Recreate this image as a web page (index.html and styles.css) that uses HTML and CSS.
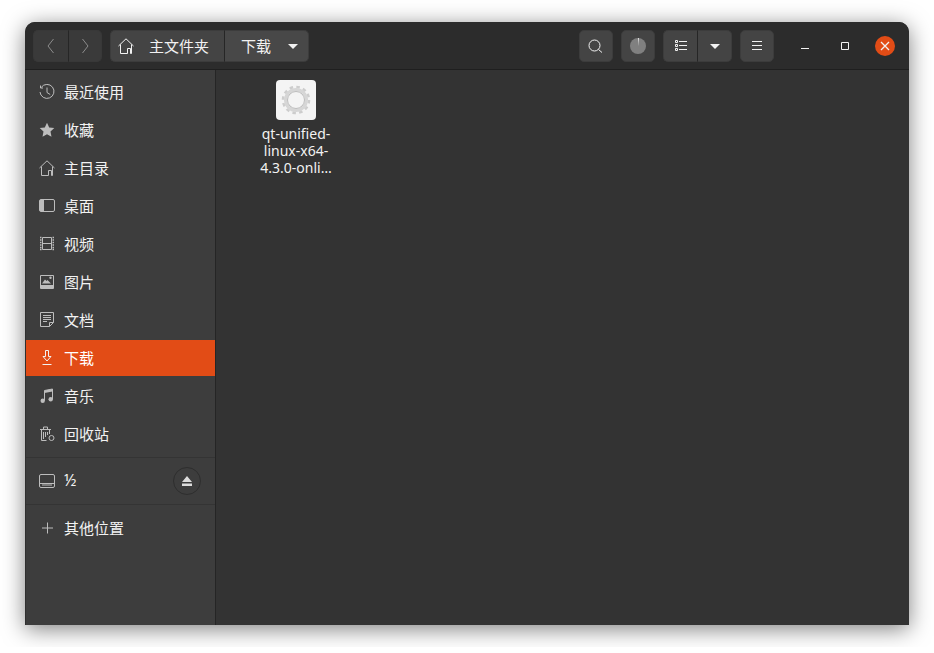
FILE: index.html
```html
<!DOCTYPE html>
<html lang="zh-CN">
<head>
    <meta charset="UTF-8">
    <title>下载</title>
    <link rel="stylesheet" href="styles.css">
</head>
<body>
    <div class="window">
        <header class="headerbar">
            <div class="btn-group nav-group">
                <button class="btn btn-nav">
                    <svg width="16" height="16" viewBox="0 0 16 16"><path d="M10.500 1 5 8l5.500 7" class="line dim"/></svg>
                </button>
                <button class="btn btn-nav">
                    <svg width="16" height="16" viewBox="0 0 16 16"><path d="M5.500 1 11 8l-5.500 7" class="line dim"/></svg>
                </button>
            </div>
            <div class="btn-group path-group">
                <button class="btn btn-home">
                    <svg width="16" height="16" viewBox="0 0 16 16"><path d="M.5 8 8 .8 15.500 8M2.500 6.500v9h7v-5h3v5h1v-9" class="line"/></svg>
                    <span>主文件夹</span>
                </button>
                <button class="btn btn-current">
                    <span>下载</span>
                    <i class="arrow"></i>
                </button>
            </div>
            <div class="spacer"></div>
            <button class="btn btn-tool">
                <svg width="16" height="16" viewBox="0 0 16 16"><circle cx="6.500" cy="7.500" r="5.500" class="line"/><path d="m10.500 11.500 3.500 3" class="line"/></svg>
            </button>
            <button class="btn btn-tool">
                <svg width="16" height="16" viewBox="0 0 16 16"><circle cx="8" cy="8" r="8" fill="#808080"/><path d="M8 0h.900L8 8z" fill="#eee"/></svg>
            </button>
            <div class="btn-group view-group">
                <button class="btn btn-tool">
                    <svg width="16" height="16" viewBox="0 0 16 16"><path d="M2.500 2.500h2v2h-2zM2.500 6.500h2v2h-2zM2.500 10.500h2v2h-2zM6 3.500h8M6 7.500h8M6 11.500h8" class="line"/></svg>
                </button>
                <button class="btn btn-tool"><i class="arrow"></i></button>
            </div>
            <button class="btn btn-tool">
                <svg width="16" height="16" viewBox="0 0 16 16"><path d="M3 3.500h10M3 7.500h10M3 11.500h10" class="line"/></svg>
            </button>
            <div class="win-controls">
                <span class="win-btn"><svg width="16" height="16" viewBox="0 0 16 16"><path d="M4 10.500h8" class="line"/></svg></span>
                <span class="win-btn"><svg width="16" height="16" viewBox="0 0 16 16"><path d="M4.500 4.500h7v7h-7z" class="line"/></svg></span>
                <span class="win-btn win-close"><svg width="16" height="16" viewBox="0 0 16 16"><path d="m4 4 8 8M12 4l-8 8" class="line"/></svg></span>
            </div>
        </header>

        <div class="content">
            <nav class="sidebar">
                <a class="side-row">
                    <svg width="16" height="16" viewBox="0 0 16 16"><path d="M2.300 3.300A7 7 0 1 1 1 8M1.500 1.500v2.500H4M8 3.500v5l3.200 2" class="icon-line"/></svg>
                    <span>最近使用</span>
                </a>
                <a class="side-row">
                    <svg width="16" height="16" viewBox="0 0 16 16"><path d="m8 .8 2.200 4.700 5.100.6-3.800 3.500 1 5.100L8 12.200l-4.500 2.500 1-5.100L.7 6.100l5.100-.6z" fill="#bdbdbd"/></svg>
                    <span>收藏</span>
                </a>
                <a class="side-row">
                    <svg width="16" height="16" viewBox="0 0 16 16"><path d="M.5 8 8 .8 15.500 8M2.500 6.500v9h7v-5h3v5h1v-9" class="icon-line"/></svg>
                    <span>主目录</span>
                </a>
                <a class="side-row">
                    <svg width="16" height="16" viewBox="0 0 16 16"><rect x=".5" y="1.500" width="15" height="12" rx="1.500" class="icon-line"/><path d="M1 2h4v11H1z" fill="#bdbdbd"/></svg>
                    <span>桌面</span>
                </a>
                <a class="side-row">
                    <svg width="16" height="16" viewBox="0 0 16 16"><path d="M3.500 1.500h9v12h-9zM3.500 7.500h9" class="icon-line"/><path d="M1 1.500h1.500M1 4h1.500M1 6.500h1.500M1 9h1.500M1 11.500h1.500M1 13.500h1.500M13.500 1.500H15M13.500 4H15M13.500 6.500H15M13.500 9H15M13.500 11.500H15M13.500 13.500H15" fill="none" stroke="#bdbdbd" stroke-width="1.300"/></svg>
                    <span>视频</span>
                </a>
                <a class="side-row">
                    <svg width="16" height="16" viewBox="0 0 16 16"><path d="M1.500 1.500h13v13h-13z" class="icon-line"/><path d="M3 9.500 6 5.500l1.500 1.500 1-1L12 9.500zM2 11h12v3H2z" fill="#bdbdbd"/><circle cx="11.500" cy="3.800" r="1.200" fill="#bdbdbd"/></svg>
                    <span>图片</span>
                </a>
                <a class="side-row">
                    <svg width="16" height="16" viewBox="0 0 16 16"><path d="M10.500 14.500h-9v-14h13v10zM10.500 14.500v-4h4M4 3.500h8M4 5.500h8M4 7.500h8M4 9.500h4" class="icon-line"/></svg>
                    <span>文档</span>
                </a>
                <a class="side-row active">
                    <svg width="16" height="16" viewBox="0 0 16 16"><path d="M6.500 .5h3v6h2.500L8 11 4 6.500h2.500zM3.500 14.500h9" class="line"/></svg>
                    <span>下载</span>
                </a>
                <a class="side-row">
                    <svg width="16" height="16" viewBox="0 0 16 16"><path d="M5.500 12.500V2.500l8-1.500v10" class="icon-line"/><path d="M5.500 2.500l8-1.500v2.500l-8 1.500z" fill="#bdbdbd"/><circle cx="3.700" cy="12.800" r="2.200" fill="#bdbdbd"/><circle cx="11.700" cy="11.300" r="2.200" fill="#bdbdbd"/></svg>
                    <span>音乐</span>
                </a>
                <a class="side-row">
                    <svg width="16" height="16" viewBox="0 0 16 16"><path d="M1 3.500h11M4.500 3V1h4v2M2.500 4v10.500h5M4.500 6v7M6.500 6v5M8.500 6v3M10.500 4v4" class="icon-line"/><circle cx="12.500" cy="12" r="2.500" class="icon-line"/></svg>
                    <span>回收站</span>
                </a>
                <div class="side-sep"></div>
                <a class="side-row drive-row">
                    <svg width="16" height="16" viewBox="0 0 16 16"><path d="M2 1.500h12a1.500 1.500 0 0 1 1.500 1.500v10a1.500 1.500 0 0 1-1.500 1.500H2A1.500 1.500 0 0 1 .5 13V3A1.500 1.500 0 0 1 2 1.500zM1 10.500h14" class="icon-line"/><path d="M3 11.500h10v1H3z" fill="#bdbdbd"/></svg>
                    <span>½</span>
                    <button class="eject">
                        <svg width="10" height="10" viewBox="0 0 10 10"><path d="M5 0 10 6H0zM0 7.500h10V10H0z" fill="#ddd"/></svg>
                    </button>
                </a>
                <div class="side-sep"></div>
                <a class="side-row">
                    <svg width="16" height="16" viewBox="0 0 16 16"><path d="M8.500 2.500v11M3 8h11" class="icon-line"/></svg>
                    <span>其他位置</span>
                </a>
            </nav>

            <main class="files">
                <div class="file-item">
                    <div class="file-icon">
                        <svg width="32" height="32" viewBox="0 0 32 32">
                            <circle cx="16" cy="16" r="13" fill="none" stroke="#cdcdcd" stroke-width="2.500" stroke-dasharray="3.500 3.300"/>
                            <circle cx="16" cy="16" r="10.500" fill="none" stroke="#d6d6d6" stroke-width="3"/>
                            <circle cx="16" cy="16" r="8.500" fill="none" stroke="#bcbcbc" stroke-width="1"/>
                        </svg>
                    </div>
                    <div class="file-name">qt-unified-<br>linux-x64-<br>4.3.0-onli…</div>
                </div>
            </main>
        </div>
    </div>
</body>
</html>
```

FILE: styles.css
```css
/* Ventana */
body {
    margin: 0;
    padding: 22px 25px;
    background-color: #fff;
    font-family: "Noto Sans", "Noto Sans CJK SC", sans-serif;
    font-size: 15px;
    color: #f2f2f2;
}
.window {
    width: 884px;
    height: 603px;
    display: flex;
    flex-direction: column;
    background: #333;
    border-radius: 10px 10px 0 0;
    box-shadow: 0 4px 22px rgba(0, 0, 0, 0.5);
    overflow: hidden;
}

/* Barra superior */
.headerbar {
    height: 48px;
    flex: none;
    display: flex;
    align-items: center;
    padding: 1px 14px 0 8px;
    gap: 8px;
    box-sizing: border-box;
    background: #2c2c2c;
    border-bottom: 1px solid #1f1f1f;
}
.spacer {
    flex: 1;
}
.btn {
    height: 32px;
    display: flex;
    align-items: center;
    justify-content: center;
    padding: 0;
    border: 1px solid #3c3c3c;
    border-radius: 5px;
    background: #444;
    color: #f2f2f2;
    font: inherit;
}
.btn span {
    margin-bottom: 2px;
}
.btn-group {
    display: flex;
}
.btn-group .btn:first-child {
    border-right: none;
    border-radius: 5px 0 0 5px;
}
.btn-group .btn:last-child {
    border-left: 1px solid #262626;
    border-radius: 0 5px 5px 0;
}
.btn-nav {
    width: 35px;
    background: #3a3a3a;
    border-color: #383838;
}
.nav-group .btn:last-child {
    width: 34px;
}
.btn-home {
    width: 114px;
    justify-content: flex-start;
    padding-left: 7px;
    gap: 15px;
}
.btn-current {
    width: 85px;
    justify-content: flex-start;
    padding-left: 16px;
    gap: 17px;
    background: #484848;
}
.btn-tool {
    width: 34px;
}
.view-group .btn:last-child {
    width: 35px;
}
.arrow {
    width: 0;
    height: 0;
    border-left: 5px solid transparent;
    border-right: 5px solid transparent;
    border-top: 5px solid #f2f2f2;
}
.line {
    fill: none;
    stroke: #f2f2f2;
    stroke-width: 1;
}
.line.dim {
    stroke: #8c8c8c;
}
.icon-line {
    fill: none;
    stroke: #bdbdbd;
    stroke-width: 1;
}
.win-controls {
    display: flex;
    align-items: center;
    gap: 20px;
    margin-left: 13px;
}
.win-btn {
    width: 20px;
    height: 20px;
    display: flex;
    align-items: center;
    justify-content: center;
    border-radius: 50%;
}
.win-close {
    background: #e24c16;
}
.win-close .line {
    stroke-width: 1.300;
}

/* Barra lateral */
.content {
    flex: 1;
    display: flex;
    min-height: 0;
}
.sidebar {
    width: 189px;
    flex: none;
    padding-top: 4px;
    background: #3d3d3d;
    border-left: 1px solid #303030;
    border-right: 1px solid #252525;
}
.side-row {
    height: 36px;
    margin-bottom: 2px;
    display: flex;
    align-items: center;
    gap: 9px;
    padding-left: 13px;
}
.side-row span {
    margin-bottom: 2px;
}
.side-row.active {
    background: #e24c16;
    color: #fff;
}
.side-sep {
    height: 1px;
    margin: 5px 0;
    background: #343434;
}
.side-row:last-child {
    margin-bottom: 0;
}
.drive-row {
    font-size: 16px;
}
.eject {
    width: 28px;
    height: 28px;
    margin-left: auto;
    margin-right: 14px;
    display: flex;
    align-items: center;
    justify-content: center;
    padding: 0;
    border: 1px solid #2e2e2e;
    border-radius: 50%;
    background: #3d3d3d;
}

/* Archivos */
.files {
    flex: 1;
    padding: 10px 0 0 30px;
    background: #333;
}
.file-item {
    width: 100px;
    display: flex;
    flex-direction: column;
    align-items: center;
}
.file-icon {
    width: 40px;
    height: 40px;
    display: flex;
    align-items: center;
    justify-content: center;
    border-radius: 4px;
    background: #f4f4f4;
}
.file-name {
    margin-top: 5px;
    font-size: 14px;
    line-height: 17px;
    text-align: center;
}
```
